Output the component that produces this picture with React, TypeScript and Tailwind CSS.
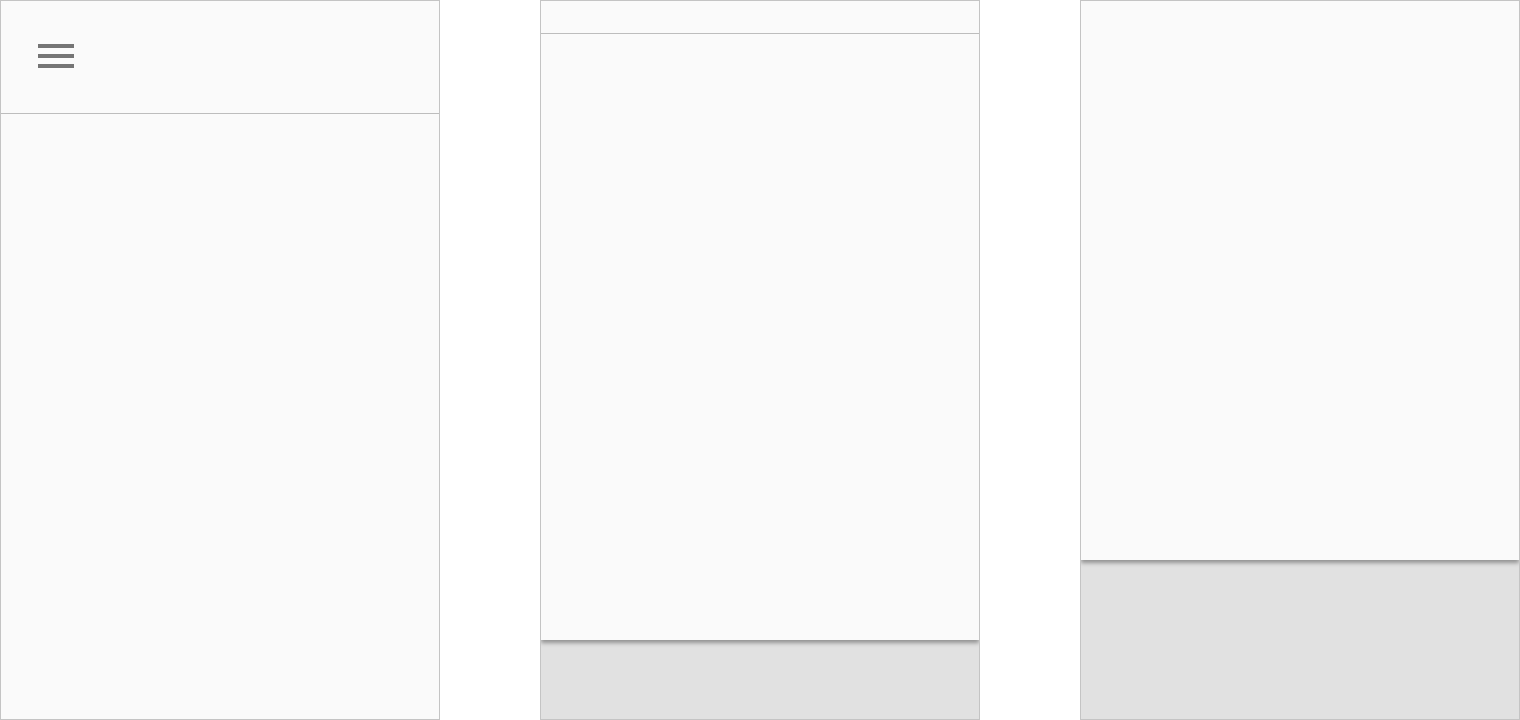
export default function App() {
  return (
    <div className="flex h-[720px] w-[1520px] gap-[100px] bg-white">
      {/* open drawer frame */}
      <div className="flex h-[720px] w-[440px] flex-col border border-[#c4c4c4] bg-[#fafafa]">
        <div className="h-[113px] border-b border-[#bdbdbd] pl-[37px] pt-[43px]">
          <div className="flex w-[36px] flex-col gap-[6px]">
            <span className="h-[4px] w-full bg-[#757575]" />
            <span className="h-[4px] w-full bg-[#757575]" />
            <span className="h-[4px] w-full bg-[#757575]" />
          </div>
        </div>
        <div className="flex-1" />
      </div>

      {/* sheet with short header */}
      <div className="flex h-[720px] w-[440px] flex-col overflow-hidden border border-[#c4c4c4] bg-[#e1e1e1]">
        <div className="relative z-10 flex h-[639px] shrink-0 flex-col bg-[#fafafa] shadow-[0_3px_4px_rgba(0,0,0,0.35)]">
          <div className="h-[33px] border-b border-[#bdbdbd]" />
        </div>
        <div className="flex-1" />
      </div>

      {/* sheet without header */}
      <div className="flex h-[720px] w-[440px] flex-col overflow-hidden border border-[#c4c4c4] bg-[#e1e1e1]">
        <div className="relative z-10 h-[559px] shrink-0 bg-[#fafafa] shadow-[0_3px_4px_rgba(0,0,0,0.35)]" />
        <div className="flex-1" />
      </div>
    </div>
  );
}
